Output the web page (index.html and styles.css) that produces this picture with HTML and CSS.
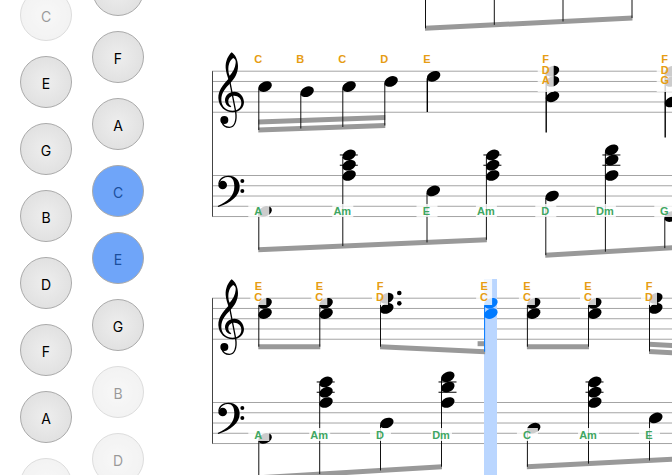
FILE: index.html
```html
<!DOCTYPE html>
<html lang="en">
<head>
    <meta charset="UTF-8">
    <title>Score Player</title>
    <meta name="viewport" content="width=device-width, initial-scale=1">
    <link rel="stylesheet" href="styles.css">
</head>
<body>
<div class="player">
    <div class="keyboard">
        <div class="row row-outer">
            <button class="key muted">C</button>
            <button class="key">E</button>
            <button class="key">G</button>
            <button class="key">B</button>
            <button class="key">D</button>
            <button class="key">F</button>
            <button class="key">A</button>
            <button class="key muted" aria-label="C"></button>
        </div>
        <div class="row row-inner">
            <button class="key" aria-label="D"></button>
            <button class="key">F</button>
            <button class="key">A</button>
            <button class="key active">C</button>
            <button class="key active">E</button>
            <button class="key">G</button>
            <button class="key muted">B</button>
            <button class="key muted">D</button>
        </div>
    </div>

    <main class="score">
        <svg class="system system-tail" id="system-0"></svg>
        <svg class="system" id="system-1"></svg>
        <svg class="system" id="system-2"></svg>
    </main>
</div>

<svg class="symbols" aria-hidden="true">
    <defs>
        <g id="treble-clef">
            <path fill-rule="evenodd" d="M95 37C84 47 76 64 77 84C78 97 82 108 85 117C68 135 55 152 55 174C56 200 76 217 98 217C118 217 132 203 132 186C131 168 119 155 103 155C87 155 75 166 75 181C75 191 81 199 91 202L94 199C87 194 84 189 85 182C86 173 93 167 103 167C115 167 124 176 124 188C124 203 113 212 98 212C78 212 64 199 64 179C64 158 77 143 92 128C104 115 114 100 114 78C114 60 105 43 95 37ZM100 54C106 57 108 62 107 69C106 84 98 97 89 107C86 101 85 94 85 86C86 71 91 59 100 54Z"/>
            <path class="clef-line" d="M87 112L107 215C111 242 104 262 88 262C78 262 69 257 66 246"/>
            <circle cx="73" cy="240" r="12"/>
        </g>
        <g id="bass-clef">
            <path d="M55 133C55 117 68 107 86 107C106 107 119 120 119 140C119 168 92 188 55 201L53 198C84 184 103 166 103 140C103 121 97 111 84 111C74 111 65 116 61 124Z"/>
            <circle cx="68" cy="135" r="13"/>
            <circle cx="127" cy="123" r="6"/>
            <circle cx="127" cy="153" r="6"/>
        </g>
    </defs>
</svg>

<script src="score.js"></script>
</body>
</html>
```
FILE: styles.css
```css
body {
    margin: 0;
    background: #fff;
    font-family: Inter, "Liberation Sans", sans-serif;
}

.player {
    display: flex;
    height: 100vh;
    overflow: hidden;
}

/* on-screen keyboard */
.keyboard {
    display: flex;
    flex: none;
    align-items: flex-start;
    gap: 20px;
    padding: 0 68px 0 20px;
}

.row {
    display: flex;
    flex-direction: column;
    gap: 15px;
}

.row-outer {
    margin-top: -11px;
}

.row-inner {
    margin-top: -36px;
}

.key {
    width: 52px;
    height: 52px;
    flex: none;
    box-sizing: border-box;
    padding: 2px 0 0;
    border: 1px solid #aaa;
    border-radius: 50%;
    background: radial-gradient(circle, #eee, #dcdcdc);
    color: #000;
    font: 14px Inter, "Liberation Sans", sans-serif;
    cursor: pointer;
}

.key.muted {
    opacity: 0.4;
}

.key.active {
    background: #6fa5f9;
    color: #1b4f9c;
}

/* sheet music */
.score {
    flex: 1;
    min-width: 0;
}

.system {
    display: block;
    width: 100%;
    height: 227px;
}

.system-tail {
    height: 40px;
}

.symbols {
    position: absolute;
    width: 0;
    height: 0;
}

.staff-line {
    stroke: #a4a4a4;
    stroke-width: 1;
}

.bar-line {
    stroke: #444;
    stroke-width: 1;
}

.ledger {
    stroke: #000;
    stroke-width: 1;
}

.clef-line {
    fill: none;
    stroke: #000;
    stroke-width: 4;
}

.beam {
    fill: #999;
}

.stem {
    stroke: #111;
    stroke-width: 1;
}

.stem.strong {
    stroke: #000;
    stroke-width: 1.4;
}

.playing .head {
    fill: #007aff;
}

.playing .stem {
    stroke: #007aff;
}

.cursor {
    fill: #bad6ff;
}

.label-back {
    fill: #fff;
    opacity: 0.8;
}

.label {
    font: bold 11px "Liberation Sans", Arial, sans-serif;
    text-anchor: middle;
}

.label.melody {
    fill: #e69d13;
}

.label.harmony {
    fill: #3fa662;
}
```
FILE: score.js
```js
const SVG_NS = 'http://www.w3.org/2000/svg';
const STEP = 5.13;          // half a staff space
const TREBLE_TOP = 31.2;
const BASS_TOP = 135.5;

// Steps count down from the top line of the staff.
// A chord is { x, steps, names, end } and end is only set when it has no beam.
const systems = [
    {
        id: 'system-0',
        tail: true,
        treble: [],
        bass: [
            { beams: [[28.3, 18]], chords: [
                { x: 213.5 }, { x: 282.3 }, { x: 351 }, { x: 420 }
            ] }
        ]
    },
    {
        id: 'system-1',
        labelY: 175,
        treble: [
            { beams: [[90, 85.5], [82, 77.6]], chords: [
                { x: 46.8, steps: [3], names: ['C'] },
                { x: 88.8, steps: [4], names: ['B'] },
                { x: 130.8, steps: [3], names: ['C'] },
                { x: 172.8, steps: [2], names: ['D'] }
            ] },
            { chords: [{ x: 215.3, steps: [1], names: ['E'], end: 72 }] },
            { chords: [{ x: 334.2, steps: [0, 2, 5], names: ['F', 'D', 'A'], end: 92.5 }] },
            { chords: [{ x: 453.2, steps: [0, 2, 6], names: ['F', 'D', 'G'], end: 97.5 }] }
        ],
        bass: [
            { beams: [[209.8, 199.8]], chords: [
                { x: 46.8, steps: [7], names: ['A'] },
                { x: 130.8, steps: [-4, -2, 0], names: ['Am'] },
                { x: 215, steps: [3], names: ['E'] },
                { x: 274.4, steps: [-4, -2, 0], names: ['Am'] }
            ] },
            { beams: [[215.2, 204.6]], chords: [
                { x: 333.8, steps: [4], names: ['D'] },
                { x: 393.4, steps: [-5, -3, 0], names: ['Dm'] },
                { x: 452.8, steps: [8], names: ['G'] },
                { x: 512, steps: [-5, -3, 0] }
            ] }
        ]
    },
    {
        id: 'system-2',
        labelY: 172,
        cursor: 272,
        treble: [
            { beams: [[79.7, 79.7]], chords: [
                { x: 46.8, steps: [1, 3], names: ['E', 'C'] },
                { x: 107.8, steps: [1, 3], names: ['E', 'C'] }
            ] },
            { beams: [[79.7, 84.7]], stub: 76.7, chords: [
                { x: 168.5, steps: [0, 2], names: ['F', 'D'], dotted: true },
                { x: 272.6, steps: [1, 3], names: ['E', 'C'], playing: true }
            ] },
            { beams: [[79.7, 79.7]], chords: [
                { x: 315.4, steps: [1, 3], names: ['E', 'C'] },
                { x: 376.5, steps: [1, 3], names: ['E', 'C'] }
            ] },
            { beams: [[84.4, 88], [77.2, 80.8]], chords: [
                { x: 437.5, steps: [0, 2], names: ['F', 'D'] },
                { x: 498.5, steps: [1, 3] }
            ] }
        ],
        bass: [
            { beams: [[210.8, 199.7]], chords: [
                { x: 46.8, steps: [7], names: ['A'] },
                { x: 107.7, steps: [-4, -2, 0], names: ['Am'] },
                { x: 168.5, steps: [4], names: ['D'] },
                { x: 229.5, steps: [-5, -3, 0], names: ['Dm'] }
            ] },
            { beams: [[199.8, 190.3]], chords: [
                { x: 315.4, steps: [5], names: ['C'] },
                { x: 376.5, steps: [-4, -2, 0], names: ['Am'] },
                { x: 437.5, steps: [3], names: ['E'] },
                { x: 498.5, steps: [-4, -2, 0] }
            ] }
        ]
    }
];

function add(parent, name, attrs, text) {
    const el = document.createElementNS(SVG_NS, name);
    for (const key in attrs) el.setAttribute(key, attrs[key]);
    if (text) el.textContent = text;
    parent.appendChild(el);
    return el;
}

function line(parent, cls, x1, y1, x2, y2) {
    return add(parent, 'line', { class: cls, x1, y1, x2, y2 });
}

function drawStaff(svg, top) {
    for (let i = 0; i < 5; i++) {
        const y = top + i * STEP * 2;
        line(svg, 'staff-line', 0, y, '100%', y);
    }
}

function drawBeam(svg, x1, y1, x2, y2) {
    const h = 2.5;
    add(svg, 'polygon', {
        class: 'beam',
        points: `${x1 - 0.5},${y1 - h} ${x2 + 0.5},${y2 - h} ${x2 + 0.5},${y2 + h} ${x1 - 0.5},${y1 + h}`
    });
}

function drawChord(svg, chord, top, end) {
    const g = add(svg, 'g', { class: chord.playing ? 'playing' : 'chord' });
    const steps = chord.steps || [];
    const start = steps.length ? top + steps[0] * STEP + 2 : 0;
    line(g, chord.end ? 'stem strong' : 'stem', chord.x, start, chord.x, end);

    for (let s = -2; s >= Math.min(...steps, 0); s -= 2) {
        line(g, 'ledger', chord.x - 3, top + s * STEP, chord.x + 15, top + s * STEP);
    }
    steps.forEach(step => {
        const x = chord.x + 6.3;
        const y = top + step * STEP;
        add(g, 'ellipse', { class: 'head', cx: x, cy: y, rx: 7.1, ry: 4.9, transform: `rotate(-25 ${x} ${y})` });
        if (chord.dotted) {
            add(g, 'circle', { cx: chord.x + 18.8, cy: y - STEP, r: 2.3 });
        }
    });
}

function drawGroup(svg, group, top) {
    const chords = group.chords;
    const first = chords[0].x;
    const last = chords[chords.length - 1].x;
    (group.beams || []).forEach(([y1, y2]) => drawBeam(svg, first, y1, last, y2));
    if (group.stub) drawBeam(svg, last - 6.5, group.stub, last - 1, group.stub);

    chords.forEach(chord => {
        let end = chord.end;
        if (!end) {
            const [y1, y2] = group.beams[0];
            end = y1 + (y2 - y1) * (chord.x - first) / (last - first);
        }
        drawChord(svg, chord, top, end);
    });
}

function drawMelodyNames(svg, chord) {
    if (!chord.names) return;
    const x = chord.x - 0.5;
    const count = chord.names.length;
    add(svg, 'rect', { class: 'label-back', x: x - 8, y: 12, width: 16, height: count * 13 + (count > 2 ? 1 : 0) });
    chord.names.forEach((name, i) => {
        add(svg, 'text', { class: 'label melody', x, y: 23 + i * 10.5 }, name);
    });
}

function drawHarmonyName(svg, chord, y) {
    if (!chord.names) return;
    const x = chord.x - 0.5;
    add(svg, 'rect', { class: 'label-back', x: x - 10, y: y - 11, width: 21, height: 13 });
    add(svg, 'text', { class: 'label harmony', x, y }, chord.names[0]);
}

function drawSystem(system) {
    const svg = document.getElementById(system.id);
    if (!system.tail) {
        drawStaff(svg, TREBLE_TOP);
        drawStaff(svg, BASS_TOP);
        line(svg, 'bar-line', 0.5, TREBLE_TOP, 0.5, BASS_TOP + 8 * STEP);
        add(svg, 'use', { href: '#treble-clef', transform: 'translate(-12 0) scale(0.3333)' });
        add(svg, 'use', { href: '#bass-clef', transform: 'translate(-12 100) scale(0.3333)' });
    }
    if (system.cursor) {
        add(svg, 'rect', { class: 'cursor', x: system.cursor, y: 12, width: 13, height: '100%' });
    }
    system.treble.forEach(group => drawGroup(svg, group, TREBLE_TOP));
    system.bass.forEach(group => drawGroup(svg, group, BASS_TOP));

    system.treble.forEach(group => group.chords.forEach(chord => drawMelodyNames(svg, chord)));
    if (system.labelY) {
        system.bass.forEach(group => group.chords.forEach(chord => drawHarmonyName(svg, chord, system.labelY)));
    }
}

systems.forEach(drawSystem);
```
